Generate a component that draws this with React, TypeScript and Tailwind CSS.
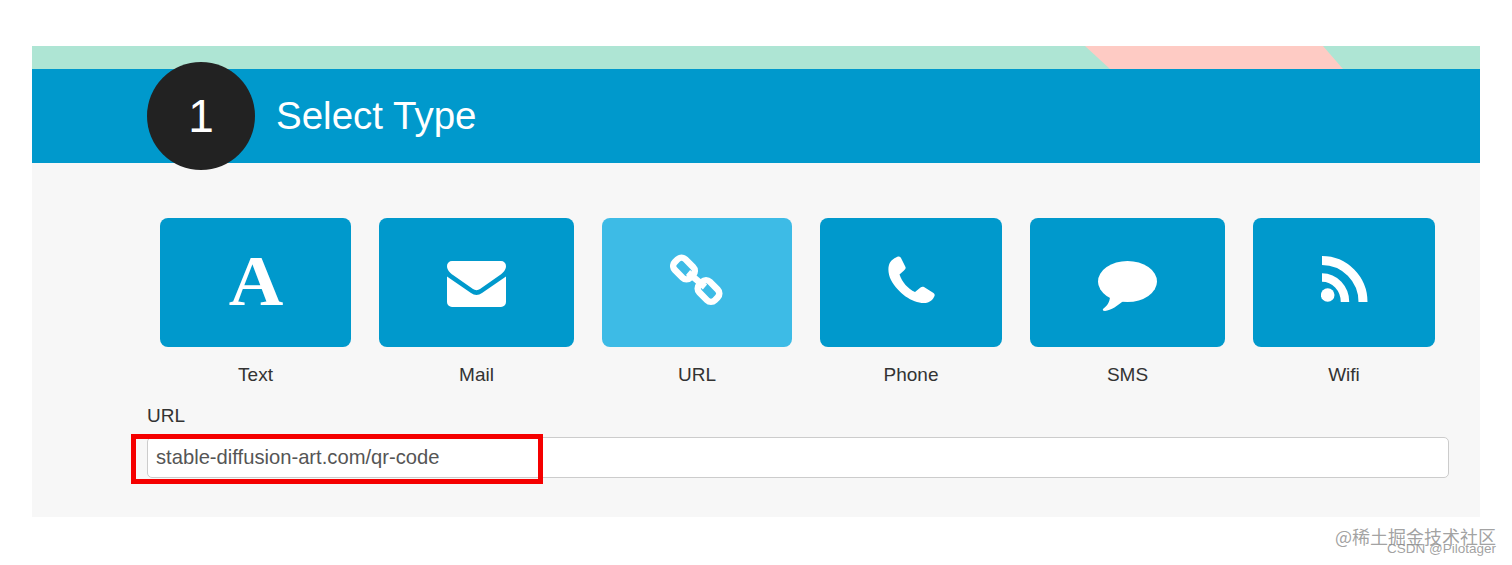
const sans = "font-['Liberation_Sans',Arial,sans-serif]";

const MailIcon = () => (
  <svg width="59" height="46" viewBox="0 0 59 46" fill="white">
    <path d="M5 0H54a5 5 0 0 1 5 5c0 4-3 7-6 9L33 28c-2 1.500-5 1.500-7 0L6 14C3 12 0 9 0 5A5 5 0 0 1 5 0Z" />
    <path d="M0 15.500L24 32c3.500 2.500 7.500 2.500 11 0L59 15.500V41a5 5 0 0 1-5 5H5a5 5 0 0 1-5-5Z" />
  </svg>
);

const LinkIcon = () => (
  <svg width="55" height="54" viewBox="0 0 55 54" fill="none" stroke="white" strokeWidth="6.500">
    <rect x="6.500" y="4.500" width="15" height="22" rx="5.500" transform="rotate(-45 14 15.500)" />
    <rect x="31" y="27" width="15" height="22" rx="5.500" transform="rotate(-45 38.500 38)" />
    <path d="M18 19.500L35 34" strokeWidth="6.500" />
  </svg>
);

const PhoneIcon = () => (
  <svg width="47" height="47" viewBox="0 0 47 47" fill="white">
    <path d="M8 1.500C10 0 12 .5 13 2L17.500 11C18 12.500 17 13.500 16 14.500L11.500 18.500C14 26 20 33 27 36L32.500 31.500C33.500 30.500 35 30.500 36 31L45.500 37C47 38 47 39.500 46 41C44 45 40 47 36 47C24 47 10 37 3 24C0 18 -.5 11 2 6.500C3.500 4 6 2.500 8 1.500Z" />
  </svg>
);

const ChatIcon = () => (
  <svg width="59" height="50" viewBox="0 0 59 50" fill="white">
    <ellipse cx="29.500" cy="20.500" rx="29.500" ry="20.500" />
    <path d="M12 35C12 41 9 45 5 48C4.500 49 5 50 7 50C13 49 20 45 26 39Z" />
  </svg>
);

const RssIcon = () => (
  <svg width="47" height="47" viewBox="0 0 47 47" fill="none" stroke="white">
    <circle cx="6.700" cy="39" r="6.800" fill="white" stroke="none" />
    <path d="M1 4.500A41 41.500 0 0 1 42 46" strokeWidth="9" />
    <path d="M1 21.500A23 24.500 0 0 1 24 46" strokeWidth="8.500" />
  </svg>
);

const types = [
  { label: "Text", width: "w-[191px]", tile: "bg-[#0099cc] pb-[3px]", icon: <span className="scale-x-105 font-['Liberation_Serif',serif] font-bold text-[72px] leading-none text-white">A</span> },
  { label: "Mail", width: "w-[195px]", tile: "bg-[#0099cc] pt-[3px]", icon: <MailIcon /> },
  { label: "URL", width: "w-[190px]", tile: "bg-[#3dbbe6] pb-[5px]", icon: <LinkIcon /> },
  { label: "Phone", width: "w-[182px]", tile: "bg-[#0099cc] pb-[6px]", icon: <PhoneIcon /> },
  { label: "SMS", width: "w-[195px]", tile: "bg-[#0099cc] pt-[6px]", icon: <ChatIcon /> },
  { label: "Wifi", width: "w-[182px]", tile: "bg-[#0099cc] pb-[6px]", icon: <RssIcon /> },
];

const App = () => {
  return (
    <div className={`relative h-[565px] w-[1512px] overflow-hidden bg-white pt-[46px] pl-[32px] ${sans}`}>
      <div className="w-[1448px]">
        <div className="relative h-[23px] bg-[#aee5d4]">
          <div className="absolute top-0 left-[1053px] h-full w-[260px] bg-[#fecbc4] [clip-path:polygon(0_0,238px_0,258px_100%,25px_100%)]" />
        </div>

        <div className="relative z-10 flex h-[94px] items-center bg-[#0099cc] pl-[244px]">
          <div className="absolute top-[-7px] left-[115px] flex size-[108px] items-center justify-center rounded-full bg-[#222222] text-[46px] text-white">
            1
          </div>
          <h1 className="text-[38.500px] leading-none text-white">Select Type</h1>
        </div>

        <div className="bg-[#f7f7f7] pt-[55px] pb-[39px] pl-[115px]">
          <div className="ml-[13px] flex gap-[28px]">
            {types.map((type) => (
              <div key={type.label} className={`flex flex-col items-center ${type.width}`}>
                <div className={`flex h-[129px] w-full items-center justify-center rounded-[8px] ${type.tile}`}>
                  {type.icon}
                </div>
                <div className="mt-[16px] text-[19px] leading-6 text-[#333333]">{type.label}</div>
              </div>
            ))}
          </div>

          <label className="mt-[17px] block text-[19px] leading-6 text-[#333333]">URL</label>
          <input
            readOnly
            value="stable-diffusion-art.com/qr-code"
            className="mt-[9px] block h-[41px] w-[1302px] rounded-[5px] border border-[#cccccc] bg-white px-[8px] text-[20.200px] text-[#555555] outline-none"
          />
        </div>
      </div>

      <div className="pointer-events-none absolute top-[434px] left-[131px] h-[50px] w-[412px] border-[5px] border-[#f50000]" />

      <div className="absolute top-[525px] left-[1335px] flex flex-col items-start text-[#8a8a8a]/80">
        <span className="font-['Noto_Sans_CJK_SC',sans-serif] text-[18px] leading-[22px]">@稀土掘金技术社区</span>
        <span className="-mt-[6px] ml-[52px] text-[13.500px] leading-4">CSDN @Pilotager</span>
      </div>
    </div>
  );
};

export default App;
